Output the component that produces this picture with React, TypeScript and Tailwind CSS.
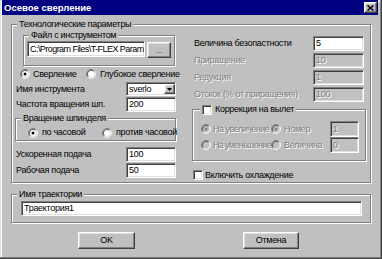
import React from 'react';

const sunken =
  'border border-t-[#808080] border-l-[#808080] border-b-white border-r-white shadow-[inset_1px_1px_#404040,inset_-1px_-1px_#dfdfdf]';
const raised =
  'border border-t-white border-l-white border-b-[#404040] border-r-[#404040] shadow-[inset_-1px_-1px_#808080,inset_1px_1px_#dfdfdf]';
const etched = 'relative border border-[#808080] shadow-[inset_1px_1px_#fff,1px_1px_#fff]';
const dimText = 'text-[#808080] [text-shadow:1px_1px_#fff]';

const Radio: React.FC<{ checked?: boolean; disabled?: boolean }> = ({ checked, disabled }) => (
  <svg width="10" height="10" viewBox="0 0 12 12" className="shrink-0">
    <circle cx="6" cy="6" r="4.2" fill={disabled ? '#c0c0c0' : '#fff'} />
    <path d="M2.11 9.89 A5.5 5.5 0 0 1 9.89 2.11" fill="none" stroke="#808080" />
    <path d="M9.89 2.11 A5.5 5.5 0 0 1 2.11 9.89" fill="none" stroke="#fff" />
    <path d="M2.82 9.18 A4.5 4.5 0 0 1 9.18 2.82" fill="none" stroke="#404040" />
    <path d="M9.18 2.82 A4.5 4.5 0 0 1 2.82 9.18" fill="none" stroke="#dfdfdf" />
    {checked && <circle cx="6" cy="6" r="1.8" fill={disabled ? '#808080' : '#000'} />}
  </svg>
);

const Check: React.FC = () => <span className={`block w-[10px] h-[10px] shrink-0 bg-white ${sunken}`} />;

const Field: React.FC<{ value: string; disabled?: boolean; className?: string }> = ({ value, disabled, className }) => (
  <div
    className={`h-[15px] shrink-0 flex items-center pl-[2px] overflow-hidden whitespace-nowrap ${sunken} ${
      disabled ? `bg-[#c0c0c0] ${dimText}` : 'bg-white'
    } ${className ?? ''}`}
  >
    {value}
  </div>
);

const Legend: React.FC<{ children: React.ReactNode; className?: string }> = ({ children, className }) => (
  <span className={`absolute -top-[6px] left-[5px] px-[2px] bg-[#c0c0c0] leading-[11px] flex items-center gap-[2px] whitespace-nowrap ${className ?? ''}`}>
    {children}
  </span>
);

const Row: React.FC<{ label: string; value: string; disabled?: boolean; className?: string; labelW: string }> = ({
  label,
  value,
  disabled,
  className,
  labelW,
}) => (
  <div className={`flex items-center h-[15px] ${className ?? ''}`}>
    <span className={`${labelW} shrink-0 whitespace-nowrap ${disabled ? dimText : ''}`}>{label}</span>
    <Field value={value} disabled={disabled} className="w-[51px]" />
  </div>
);

export default function App() {
  return (
    <div className="w-[382px] h-[259px] bg-[#c0c0c0] text-black text-[9px] tracking-[-0.3px] leading-none font-['Liberation_Sans',Arial,sans-serif] pl-[2px] pr-[4px] shadow-[inset_-1px_-1px_#404040,inset_-2px_-2px_#808080,inset_1px_1px_#dfdfdf,inset_2px_2px_#fff] overflow-hidden">
      {/* title bar */}
      <div className="h-[15px] bg-[#000080] flex items-center justify-between pl-[2px] pr-[1px]">
        <span className="text-white font-bold text-[9.5px] tracking-normal">Осевое сверление</span>
        <div className={`w-[13px] h-[11px] bg-[#c0c0c0] flex items-center justify-center ${raised}`}>
          <svg width="7" height="6" viewBox="0 0 7 6">
            <path d="M0.5 0.5 L6.5 5.5 M6.5 0.5 L0.5 5.5" stroke="#000" strokeWidth="1.6" />
          </svg>
        </div>
      </div>

      {/* technology parameters */}
      <div className={`${etched} ml-[9px] mt-[9px] w-[360px] h-[159px] flex pl-[3px]`}>
        <Legend>Технологические параметры</Legend>

        {/* left column */}
        <div className="w-[161px] shrink-0 flex flex-col">
          <div className={`${etched} ml-[8px] mt-[10px] w-[152px] h-[31px] flex items-start pl-[3px] pt-[5px]`}>
            <Legend>Файл с инструментом</Legend>
            <Field value="C:\Program Files\T-FLEX Param" className="w-[118px] h-[16px] tracking-[-0.55px] pl-[1px]" />
            <div className={`ml-[2px] mt-[1px] w-[24px] h-[16px] shrink-0 flex items-center justify-center text-[#606060] ${raised}`}>
              ...
            </div>
          </div>

          <div className="flex items-center h-[12px] mt-[2px] pl-[5px]">
            <Radio checked />
            <span className="ml-[3px] w-[53px] shrink-0">Сверление</span>
            <Radio />
            <span className="ml-[4px] whitespace-nowrap">Глубокое сверление</span>
          </div>

          <div className="flex items-center h-[14px] mt-[2px] pl-[1px]">
            <span className="w-[110px] shrink-0">Имя инструмента</span>
            <div className={`w-[50px] h-[14px] bg-white flex items-center pl-[2px] ${sunken}`}>
              <span className="flex-1">sverlo</span>
              <div className={`w-[11px] h-[10px] bg-[#c0c0c0] flex items-center justify-center ${raised}`}>
                <svg width="5" height="3" viewBox="0 0 5 3">
                  <path d="M0 0 H5 L2.5 3 Z" fill="#000" />
                </svg>
              </div>
            </div>
          </div>

          <div className="flex items-center h-[15px] mt-[1px] pl-[1px]">
            <span className="w-[110px] shrink-0 whitespace-nowrap">Частота вращения шп.</span>
            <Field value="200" className="w-[50px]" />
          </div>

          <div className={`${etched} mt-[6px] w-[161px] h-[23px] flex items-center pt-[6px]`}>
            <Legend>Вращение шпинделя</Legend>
            <span className="ml-[12px]"><Radio checked /></span>
            <span className="ml-[4px] w-[60px] shrink-0">по часовой</span>
            <Radio />
            <span className="ml-[4px] whitespace-nowrap">против часовой</span>
          </div>

          <div className="flex items-center h-[15px] mt-[6px] pl-[1px]">
            <span className="w-[110px] shrink-0">Ускоренная подача</span>
            <Field value="100" className="w-[50px]" />
          </div>
          <div className="flex items-center h-[15px] mt-[1px] pl-[1px]">
            <span className="w-[110px] shrink-0">Рабочая подача</span>
            <Field value="50" className="w-[50px]" />
          </div>
        </div>

        {/* right column */}
        <div className="ml-[16px] w-[174px] flex flex-col">
          <Row className="mt-[11px] pl-[2px]" labelW="w-[119px]" label="Величина безопастности" value="5" />
          <Row className="mt-[2px] pl-[2px]" labelW="w-[119px]" label="Приращение" value="10" disabled />
          <Row className="mt-[2px] pl-[2px]" labelW="w-[119px]" label="Редукция" value="1" disabled />
          <Row className="mt-[2px] pl-[2px]" labelW="w-[119px]" label="Отскок (% от приращения)" value="100" disabled />

          <div className={`${etched} mt-[7px] w-[174px] h-[52px] flex flex-col pt-[11px]`}>
            <Legend className="left-[7px] -top-[5px]">
              <Check />
              <span className="ml-[1px]">Коррекция на вылет</span>
            </Legend>
            <div className="flex items-center h-[16px] pl-[8px]">
              <Radio checked disabled />
              <span className={`ml-[2px] w-[58px] shrink-0 whitespace-nowrap tracking-[-0.5px] ${dimText}`}>На увеличение</span>
              <Radio checked disabled />
              <span className={`ml-[3px] w-[46px] shrink-0 whitespace-nowrap ${dimText}`}>Номер</span>
              <Field value="1" disabled className="w-[29px] h-[16px]" />
            </div>
            <div className="flex items-center h-[16px] pl-[8px]">
              <Radio disabled />
              <span className={`ml-[2px] w-[58px] shrink-0 whitespace-nowrap tracking-[-0.65px] ${dimText}`}>На уменьшение</span>
              <Radio disabled />
              <span className={`ml-[3px] w-[46px] shrink-0 whitespace-nowrap ${dimText}`}>Величина</span>
              <Field value="0" disabled className="w-[29px] h-[16px]" />
            </div>
          </div>

          <div className="flex items-center mt-[9px] pl-[1px]">
            <Check />
            <span className="ml-[2px]">Включить охлаждение</span>
          </div>
        </div>
      </div>

      {/* trajectory name */}
      <div className={`${etched} ml-[9px] mt-[11px] w-[360px] h-[29px] pl-[9px] pt-[6px]`}>
        <Legend>Имя траектории</Legend>
        <Field value="Траектория1" className="w-[341px]" />
      </div>

      {/* buttons */}
      <div className="flex mt-[9px] pl-[76px]">
        <div className={`w-[57px] h-[17px] flex items-center justify-center ${raised}`}>OK</div>
        <div className={`ml-[108px] w-[56px] h-[17px] flex items-center justify-center ${raised}`}>Отмена</div>
      </div>
    </div>
  );
}
